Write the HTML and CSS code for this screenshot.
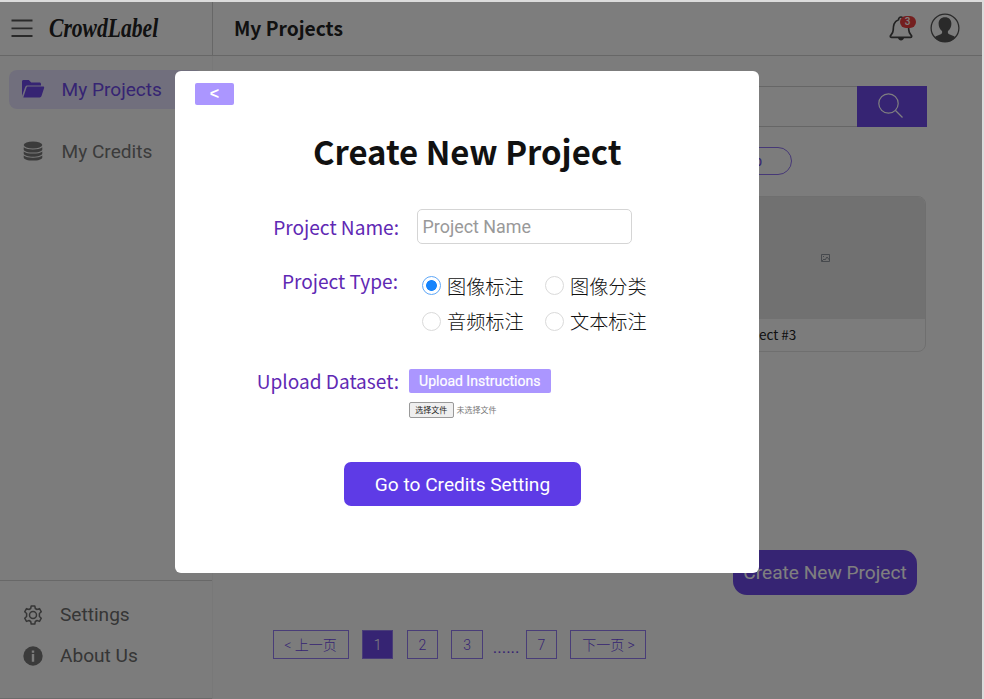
FILE: index.html
```html
<!DOCTYPE html>
<html lang="en">
<head>
<meta charset="utf-8">
<title>CrowdLabel</title>
<link rel="stylesheet" href="styles.css">
</head>
<body>
<div class="app">
  <header class="header">
    <div class="brand">
      <svg class="menu" viewBox="0 0 22 20"><path d="M.5 2.500h21M.5 10.300h21M.5 18h21"/></svg>
      <span class="logo">CrowdLabel</span>
    </div>
    <h1 class="page-title">My Projects</h1>
    <div class="bell">
      <svg viewBox="0 0 24 26"><path d="M1.300 21.300c0-1.400 2.600-2 2.900-6.200.2-4.500.4-8.300 5.200-10.300C9.700 3 10.400 2 12 2s2.300 1 2.600 2.800c4.800 2 5 5.800 5.200 10.300.3 4.200 2.900 4.800 2.900 6.200 0 .8-.5 1-1.200 1h-19c-.7 0-1.200-.2-1.200-1z"/><path class="clapper" d="M9 23h6c-.4 1.600-1.500 2.500-3 2.500S9.400 24.600 9 23z"/></svg>
      <span class="badge">3</span>
    </div>
    <svg class="avatar" viewBox="0 0 30 30"><circle cx="15" cy="15" r="13.900"/><path d="M15 4.300c-4 0-6.400 2.500-6.400 6.400 0 3.200 1.500 5.800 3.400 7.300.5 1.900-.1 2.900-1.800 3.500l-4.300 1.800c-.7.3-1 .9-1 1.600A14 14 0 0 0 15 29a14 14 0 0 0 10.100-4.100c0-.7-.3-1.300-1-1.600l-4.300-1.800c-1.700-.6-2.300-1.600-1.800-3.500 1.900-1.500 3.400-4.100 3.400-7.300 0-3.900-2.400-6.400-6.400-6.400z"/></svg>
  </header>
  <div class="body">
    <aside class="sidebar">
      <nav class="nav">
        <a class="nav-item active"><svg viewBox="0 0 24 20"><path d="M1 17V2.500C1 1.600 1.600 1 2.500 1h5.300l2.400 2.500h8.300c.9 0 1.500.6 1.500 1.500v1.500H6.500c-1.200 0-2 .6-2.400 1.700z"/><path d="M2.300 18.500 5.400 9c.3-.9.900-1.400 1.800-1.400h14.900c.9 0 1.300.6 1 1.500l-2.600 8c-.3.9-.9 1.400-1.800 1.400z"/></svg><span>My Projects</span></a>
        <a class="nav-item"><svg viewBox="0 0 24 20"><ellipse cx="12" cy="4" rx="9.300" ry="3.500"/><path d="M2.700 6.200v2.200c0 1.900 4.200 3.200 9.300 3.200s9.300-1.300 9.300-3.200V6.200c-2 1.600-5.500 2.200-9.300 2.200S4.700 7.800 2.700 6.200z"/><path d="M2.700 10.400v2.200c0 1.900 4.200 3.200 9.300 3.200s9.300-1.300 9.300-3.200v-2.200c-2 1.600-5.500 2.200-9.300 2.200s-7.300-.6-9.300-2.200z"/><path d="M2.700 14.600v1.800c0 1.900 4.200 3.200 9.300 3.200s9.300-1.300 9.300-3.200v-1.800c-2 1.600-5.500 2.200-9.300 2.200s-7.300-.6-9.300-2.200z"/></svg><span>My Credits</span></a>
      </nav>
      <div class="nav-foot">
        <a class="foot-item"><svg class="gear" viewBox="0 0 20 20"><path d="M8.200 1h3.600l.5 2.500 1.700 1 2.500-.9 1.800 3.200-1.900 1.700v3l1.900 1.700-1.800 3.200-2.500-.9-1.700 1-.5 2.500H8.200l-.5-2.500-1.700-1-2.500.9-1.800-3.200 1.900-1.700v-3L1.700 6.800l1.800-3.200 2.500.9 1.700-1z"/><circle cx="10" cy="10" r="3.500"/></svg><span>Settings</span></a>
        <a class="foot-item"><svg class="info" viewBox="0 0 20 20"><circle cx="10" cy="10" r="9.700"/><path d="M8.800 4.400h2.400v2.300H8.800zM8.800 8h2.400v7.800H8.800z"/></svg><span>About Us</span></a>
      </div>
    </aside>
    <main class="main">
      <div class="search">
        <div class="search-box"></div>
        <div class="search-btn"><svg viewBox="0 0 26 26"><circle cx="10.500" cy="10.500" r="9.700"/><path d="m17.500 17.500 7 7"/></svg></div>
      </div>
      <div class="filters"><span class="pill">Group</span></div>
      <div class="cards">
        <article class="card">
          <div class="thumb"><svg viewBox="0 0 9 8"><path d="M.5.5h8v7h-8zM1 7l2-2 1 1 2-3 2.500 3M2 2.500h1"/></svg></div>
          <div class="card-name">Project #3</div>
        </article>
      </div>
      <div class="create-row"><a class="create">Create New Project</a></div>
      <div class="pager">
        <a class="pg prev">&lt; 上一页</a><a class="pg on">1</a><a class="pg">2</a><a class="pg">3</a><span class="dots">......</span><a class="pg">7</a><a class="pg next">下一页 &gt;</a>
      </div>
    </main>
  </div>
</div>
<div class="overlay">
  <section class="modal">
    <button class="back">&lt;</button>
    <h2 class="modal-title">Create New Project</h2>
    <div class="row row-name"><label class="label">Project Name:</label><input class="name" placeholder="Project Name"></div>
    <div class="row row-type"><span class="label">Project Type:</span>
      <div class="types">
        <label class="type"><i class="radio checked"></i>图像标注</label>
        <label class="type"><i class="radio"></i>图像分类</label>
        <label class="type"><i class="radio"></i>音频标注</label>
        <label class="type"><i class="radio"></i>文本标注</label>
      </div>
    </div>
    <div class="row row-upload"><span class="label">Upload Dataset:</span>
      <div class="upload">
        <button class="instructions">Upload Instructions</button>
        <div class="file"><button class="choose">选择文件</button><span>未选择文件</span></div>
      </div>
    </div>
    <button class="go">Go to Credits Setting</button>
  </section>
</div>
</body>
</html>
```
FILE: styles.css
```css
* { box-sizing: border-box; }
body { margin: 0; width: 984px; height: 699px; overflow: hidden; background: #dcdcdc; font-family: Roboto, "Noto Sans CJK SC", sans-serif; }
button { border: 0; padding: 0; font-family: inherit; }
svg { display: block; flex: none; }

.app { width: 982px; height: 697px; margin-top: 2px; background: #f9f9f9; display: flex; flex-direction: column; overflow: hidden; }
.header { height: 54px; flex: none; display: flex; align-items: center; border-bottom: 1px solid #cfcfcf; background: #fbfbfb; padding-bottom: 1px; }
.brand { width: 213px; height: 54px; border-right: 1px solid #cfcfcf; display: flex; align-items: center; padding: 0 0 1px 11px; }
.menu { width: 22px; height: 20px; fill: none; stroke: #555; stroke-width: 1.8; }
.logo { margin-left: 16px; width: 110px; font: italic bold 27px/36px "Liberation Serif", serif; color: #222; transform: scaleX(.8); transform-origin: 0 50%; white-space: nowrap; }
.page-title { margin: 0 auto 0 21px; font: bold 19.200px/30px "Noto Sans CJK SC", sans-serif; color: #222; }
.bell { position: relative; width: 24px; height: 26px; margin-right: 17px; }
.bell svg { width: 24px; height: 26px; fill: none; stroke: #444; stroke-width: 1.7; }
.bell .clapper { fill: #444; stroke: none; }
.badge { position: absolute; left: 11px; top: 1px; width: 16px; height: 12px; border-radius: 6px; background: #e93e3e; color: #fff; font-size: 10px; font-weight: 500; line-height: 12px; text-align: center; }
.avatar { width: 30px; height: 30px; margin-right: 22.500px; fill: #555; }
.avatar circle { fill: none; stroke: #555; stroke-width: 1.3; }

.body { flex: 1; display: flex; min-height: 0; }
.sidebar { width: 213px; border-right: 1px solid #f1f1f1; display: flex; flex-direction: column; justify-content: space-between; }
.nav { padding: 14px 8px 0 9px; display: flex; flex-direction: column; gap: 23px; }
.nav-item { height: 39px; display: flex; align-items: center; padding: 0 0 1px 12px; gap: 16.500px; border-radius: 8px; color: #777; font-size: 19.100px; }
.nav-item svg { width: 24px; height: 20px; fill: #777; }
.nav-item.active { background: #e3dffa; color: #6c48e6; }
.nav-item.active svg { fill: #6c48e6; }
.nav-foot { height: 119px; border-top: 1px solid #d0d0d0; border-bottom: 1px solid #d6d6d6; padding: 13px 0 0 23px; }
.foot-item { height: 41px; display: flex; align-items: center; gap: 17px; color: #6c6c6c; font-size: 19.100px; }
.foot-item svg { width: 20px; height: 20px; }
.gear { fill: none; stroke: #6c6c6c; stroke-width: 1.5; stroke-linejoin: round; }
.info { fill: #777; }
.info path { fill: #f9f9f9; }

.main { flex: 1; min-width: 0; padding: 30px 55px 0 59px; }
.search { display: flex; height: 41px; }
.search-box { flex: 1; border: 1px solid #cdcdcd; border-right: 0; }
.search-btn { width: 70px; background: #6c48e6; display: flex; align-items: center; justify-content: center; }
.search-btn svg { width: 26px; height: 26px; margin: -1px 3px 0 0; fill: none; stroke: #fff; stroke-width: 1.2; }
.filters { height: 69px; padding: 20px 135px 0 0; display: flex; justify-content: flex-end; }
.pill { width: 90px; height: 28px; border: 1px solid #8c70ee; border-radius: 14px; color: #6c48e6; font-size: 14px; line-height: 27px; text-align: right; padding-right: 29px; }
.cards { display: flex; justify-content: flex-end; padding-right: 1px; }
.card { width: 202px; height: 156px; border: 1px solid #dedede; border-radius: 8px; overflow: hidden; }
.thumb { height: 122px; background: #e3e3e3; display: flex; align-items: center; justify-content: center; }
.thumb svg { width: 9px; height: 8px; fill: none; stroke: #777f88; stroke-width: .8; }
.card-name { padding-left: 8.500px; font: 13.500px/31px "Noto Sans CJK SC", sans-serif; color: #222; }
.create-row { display: flex; justify-content: flex-end; padding: 198px 10px 0 0; }
.create { width: 184px; height: 45px; border-radius: 14px; background: #6c48e6; color: #fff; font-size: 19.100px; line-height: 45px; text-align: center; white-space: nowrap; }
.pager { margin-top: 35px; height: 29px; display: flex; align-items: stretch; color: #6c48e6; font: 14px/28px Roboto, "Noto Sans CJK SC", sans-serif; padding-left: .5px; }
.pg { width: 31.500px; margin-right: 13.300px; border: 1px solid #927af0; text-align: center; font-weight: 300; }
.pg.prev, .pg.next { width: 76px; }
.pg.on { background: #6c48e6; color: #fff; }
.dots { width: 30px; margin-left: -3.500px; font-size: 17px; line-height: 34px; margin-right: 3px; }

.overlay { position: absolute; left: 0; top: 2px; width: 982px; height: 697px; background: rgba(0,0,0,.5); padding: 68.500px 0 0 174.500px; }
.modal { width: 584.500px; height: 502px; border-radius: 6px; background: #fff; padding: 12.500px 20.500px; display: flex; flex-direction: column; align-items: flex-start; }
.back { width: 39px; height: 22px; border-radius: 2px; background: #ab96ff; color: #fff; font: bold 16px/22px "Liberation Sans", sans-serif; }
.modal-title { align-self: center; margin: 20px 0 0 1px; font: bold 32.900px/52px "Noto Sans CJK SC", sans-serif; color: #111; }
.row { display: flex; align-items: flex-start; }
.label { width: 204px; text-align: right; color: #5f29b4; font: 19.100px/30px "Noto Sans CJK SC", sans-serif; flex: none; }
.row-name { height: 35px; margin-top: 32px; }
.row-name .label { padding-top: 3px; }
.name { width: 215px; height: 35px; margin-left: 18px; border: 1px solid #d5d5d5; border-radius: 5px; padding: 0 4.500px; font: 17.900px Roboto, sans-serif; outline: 0; }
.name::placeholder { color: #999; }
.row-type { margin-top: 22px; height: 80px; }
.row-type .label { padding-right: 1px; }
.types { display: grid; grid-template-columns: 123px 123px; grid-auto-rows: 35.500px; margin: 2px 0 0 23px; }
.type { display: flex; align-items: center; gap: 6px; color: #111; font: 300 19.200px/30px "Noto Sans CJK SC", sans-serif; white-space: nowrap; }
.radio { width: 19px; height: 19px; border: 1px solid #dadada; border-radius: 50%; flex: none; }
.radio.checked { border-color: #5fa7f7; background: radial-gradient(circle, #1684fc 5px, #fff 5.800px); }
.row-upload { margin-top: 20px; height: 60px; }
.upload { margin: 2.500px 0 0 10px; }
.instructions { display: block; width: 141.500px; height: 24px; border-radius: 2px; background: #ab96ff; color: #fff; font-size: 14px; -webkit-text-stroke: .2px #fff; }
.file { margin-top: 9px; display: flex; align-items: center; gap: 3px; color: #777; font: 8px/16px "Noto Sans CJK SC", sans-serif; }
.choose { width: 44.500px; height: 16px; border: 1px solid #999; border-radius: 2px; background: #efefef; color: #222; font: 8px/13px "Noto Sans CJK SC", sans-serif; }
.go { width: 237px; height: 44px; margin: 36px 0 0 149px; border-radius: 7px; background: #5e3be6; color: #fff; font-size: 19.100px; }
```
